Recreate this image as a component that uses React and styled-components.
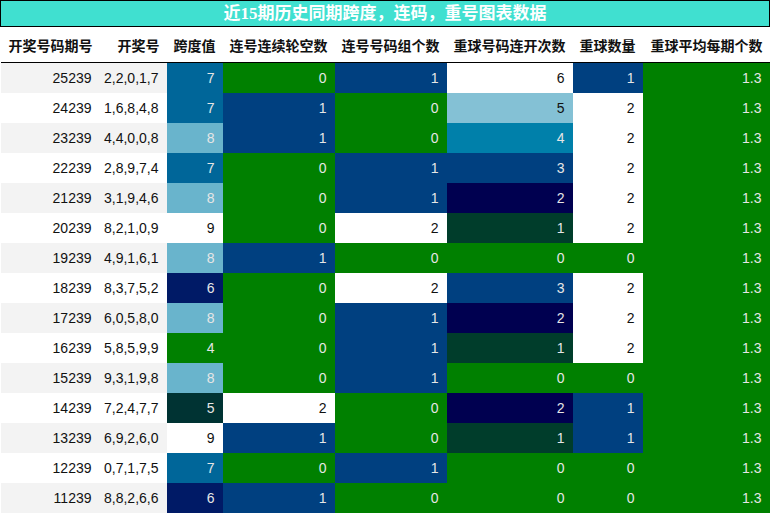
import React from "react";
import styled, { createGlobalStyle } from "styled-components";

const GlobalStyle = createGlobalStyle`
	body {
		margin: 0;
		background: #ffffff;
	}
`;

const rows = [
	["25239", "2,2,0,1,7", 7, 0, 1, 6, 1],
	["24239", "1,6,8,4,8", 7, 1, 0, 5, 2],
	["23239", "4,4,0,0,8", 8, 1, 0, 4, 2],
	["22239", "2,8,9,7,4", 7, 0, 1, 3, 2],
	["21239", "3,1,9,4,6", 8, 0, 1, 2, 2],
	["20239", "8,2,1,0,9", 9, 0, 2, 1, 2],
	["19239", "4,9,1,6,1", 8, 1, 0, 0, 0],
	["18239", "8,3,7,5,2", 6, 0, 2, 3, 2],
	["17239", "6,0,5,8,0", 8, 0, 1, 2, 2],
	["16239", "5,8,5,9,9", 4, 0, 1, 1, 2],
	["15239", "9,3,1,9,8", 8, 0, 1, 0, 0],
	["14239", "7,2,4,7,7", 5, 2, 0, 2, 1],
	["13239", "6,9,2,6,0", 9, 1, 0, 1, 1],
	["12239", "0,7,1,7,5", 7, 0, 1, 0, 0],
	["11239", "8,8,2,6,6", 6, 1, 0, 0, 0],
];

const headers = [
	"开奖号码期号",
	"开奖号",
	"跨度值",
	"连号连续轮空数",
	"连号号码组个数",
	"重球号码连开次数",
	"重球数量",
	"重球平均每期个数",
];

const widths = [99, 67, 56, 112, 112, 126, 70, 127];

// background per value, one map per kind of column
const spanColors = {
	9: "#ffffff",
	8: "#69b4cc",
	7: "#006699",
	6: "#001a66",
	5: "#003333",
	4: "#008000",
};
const countColors = { 0: "#008000", 1: "#004080", 2: "#ffffff" };
const repeatColors = {
	6: "#ffffff",
	5: "#84c1d5",
	4: "#0080aa",
	3: "#004080",
	2: "#000050",
	1: "#003d2b",
	0: "#008000",
};
const lightBg = ["#ffffff", "#84c1d5"];

const Table = styled.table`
	width: 769px;
	border-collapse: collapse;
	table-layout: fixed;
	font-family: "Liberation Sans", Arial, "Noto Sans CJK SC", sans-serif;
	font-size: 14px;
`;

const TitleCell = styled.th`
	height: 25px;
	padding: 0;
	background: #40e0d0;
	border: 1px solid #000000;
	color: #ffffff;
	font-family: "Liberation Serif", "Noto Sans CJK SC", serif;
	font-size: 17px;
	font-weight: bold;
	text-align: center;
	line-height: 25px;
`;

const HeadCell = styled.th`
	height: 35px;
	padding: 0 7px 0 0;
	border-bottom: 1px solid #000000;
	font-family: "Noto Sans CJK SC", sans-serif;
	font-size: 14px;
	font-weight: bold;
	color: #111111;
	text-align: right;
	white-space: nowrap;
`;

const Row = styled.tr`
	height: 30px;
`;

const Cell = styled.td`
	padding: 0 8px 0 0;
	text-align: right;
	background: ${(p) => p.$bg || (p.$striped ? "#f3f3f3" : "#ffffff")};
	color: ${(p) => (p.$dark ? "#e6e6e6" : "#111111")};
	white-space: nowrap;
`;

function ColorCell({ value, colors }) {
	const bg = colors[value];
	return (
		<Cell $bg={bg} $dark={!lightBg.includes(bg)}>
			{value}
		</Cell>
	);
}

export default function App() {
	return (
		<>
			<GlobalStyle />
			<Table>
				<colgroup>
					{widths.map((w, i) => (
						<col key={i} style={{ width: w }} />
					))}
				</colgroup>
				<thead>
					<tr>
						<TitleCell colSpan={8}>近15期历史同期跨度，连码，重号图表数据</TitleCell>
					</tr>
					<tr>
						{headers.map((h) => (
							<HeadCell key={h}>{h}</HeadCell>
						))}
					</tr>
				</thead>
				<tbody>
					{rows.map((r, i) => (
						<Row key={r[0]}>
							<Cell $striped={i % 2 === 0}>{r[0]}</Cell>
							<Cell $striped={i % 2 === 0}>{r[1]}</Cell>
							<ColorCell value={r[2]} colors={spanColors} />
							<ColorCell value={r[3]} colors={countColors} />
							<ColorCell value={r[4]} colors={countColors} />
							<ColorCell value={r[5]} colors={repeatColors} />
							<ColorCell value={r[6]} colors={countColors} />
							<Cell $bg="#008000" $dark>
								1.3
							</Cell>
						</Row>
					))}
				</tbody>
			</Table>
		</>
	);
}
